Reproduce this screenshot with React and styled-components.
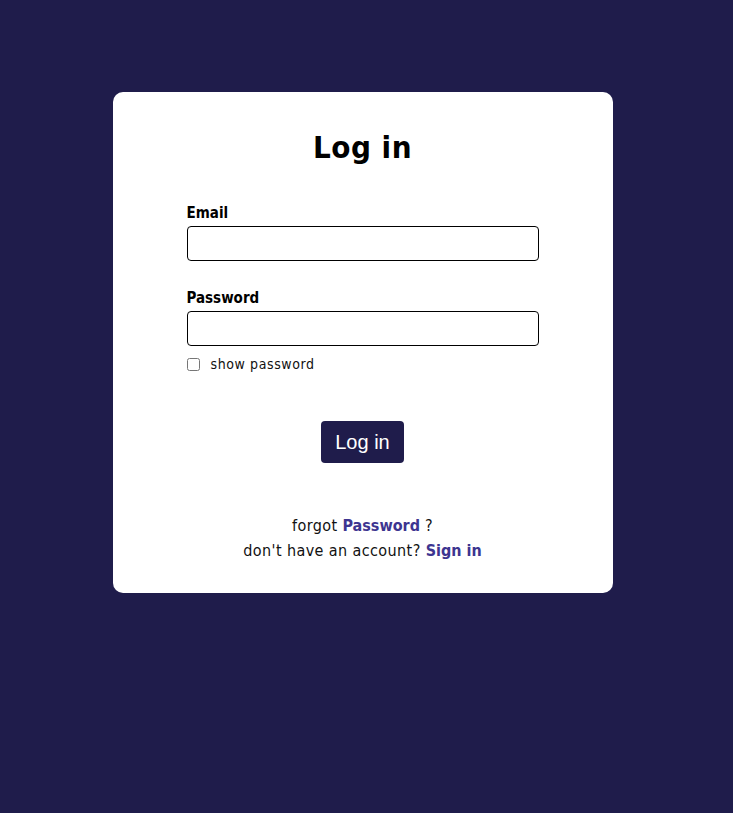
import styled, { createGlobalStyle } from 'styled-components'

const GlobalStyle = createGlobalStyle`
  html, body {
    margin: 0;
    padding: 0;
    background: #1f1c4b;
    font-family: "DejaVu Sans Condensed", "DejaVu Sans", sans-serif;
  }
`

const Page = styled.main`
  min-height: 813px;
  display: flex;
  justify-content: center;
  align-items: flex-start;
  padding: 92px 8px 0 0;
  box-sizing: border-box;
`

const Card = styled.section`
  width: 500px;
  height: 501px;
  box-sizing: border-box;
  background: #fff;
  border-radius: 10px;
  padding: 35px 74px 0;
  display: flex;
  flex-direction: column;
`

const Title = styled.h1`
  margin: 0 0 36px;
  text-align: center;
  font-size: 31px;
  font-weight: 700;
  line-height: 40px;
  letter-spacing: 0.5px;
  color: #000;
`

const Field = styled.div`
  display: flex;
  flex-direction: column;
  margin-bottom: ${p => p.$gap || 0}px;
`

const Label = styled.label`
  font-size: 15px;
  font-weight: 700;
  line-height: 20px;
  margin-bottom: 3px;
  color: #000;
`

const Input = styled.input`
  height: 35px;
  box-sizing: border-box;
  border: 1px solid #000;
  border-radius: 4px;
  padding: 0 8px;
  font-size: 16px;
  outline: none;
`

const CheckRow = styled.label`
  display: flex;
  align-items: center;
  gap: 11px;
  margin-top: 10px;
  font-size: 14px;
  color: #111;
  letter-spacing: 0.6px;

  input {
    margin: 0;
    width: 13px;
    height: 13px;
  }
`

const Button = styled.button`
  align-self: center;
  margin-top: 49px;
  width: 83px;
  height: 42px;
  border: none;
  border-radius: 4px;
  background: #1f1c4b;
  color: #fff;
  font-family: "Liberation Sans", Arial, sans-serif;
  font-size: 20px;
  cursor: pointer;
`

const Footer = styled.div`
  margin-top: 50px;
  text-align: center;
  font-size: 16px;
  line-height: 25px;
  letter-spacing: 0.4px;
  color: #111;
`

const Link = styled.a`
  color: #3d3590;
  font-weight: 700;
  letter-spacing: 0;
  text-decoration: none;
`

export default function App() {
  return (
    <>
      <GlobalStyle />
      <Page>
        <Card>
          <Title>Log in</Title>
          <Field $gap={27}>
            <Label htmlFor="email">Email</Label>
            <Input id="email" type="email" />
          </Field>
          <Field>
            <Label htmlFor="password">Password</Label>
            <Input id="password" type="password" />
          </Field>
          <CheckRow>
            <input type="checkbox" />
            show password
          </CheckRow>
          <Button>Log in</Button>
          <Footer>
            <div>forgot <Link href="#">Password</Link> ?</div>
            <div>don't have an account? <Link href="#">Sign in</Link></div>
          </Footer>
        </Card>
      </Page>
    </>
  )
}
